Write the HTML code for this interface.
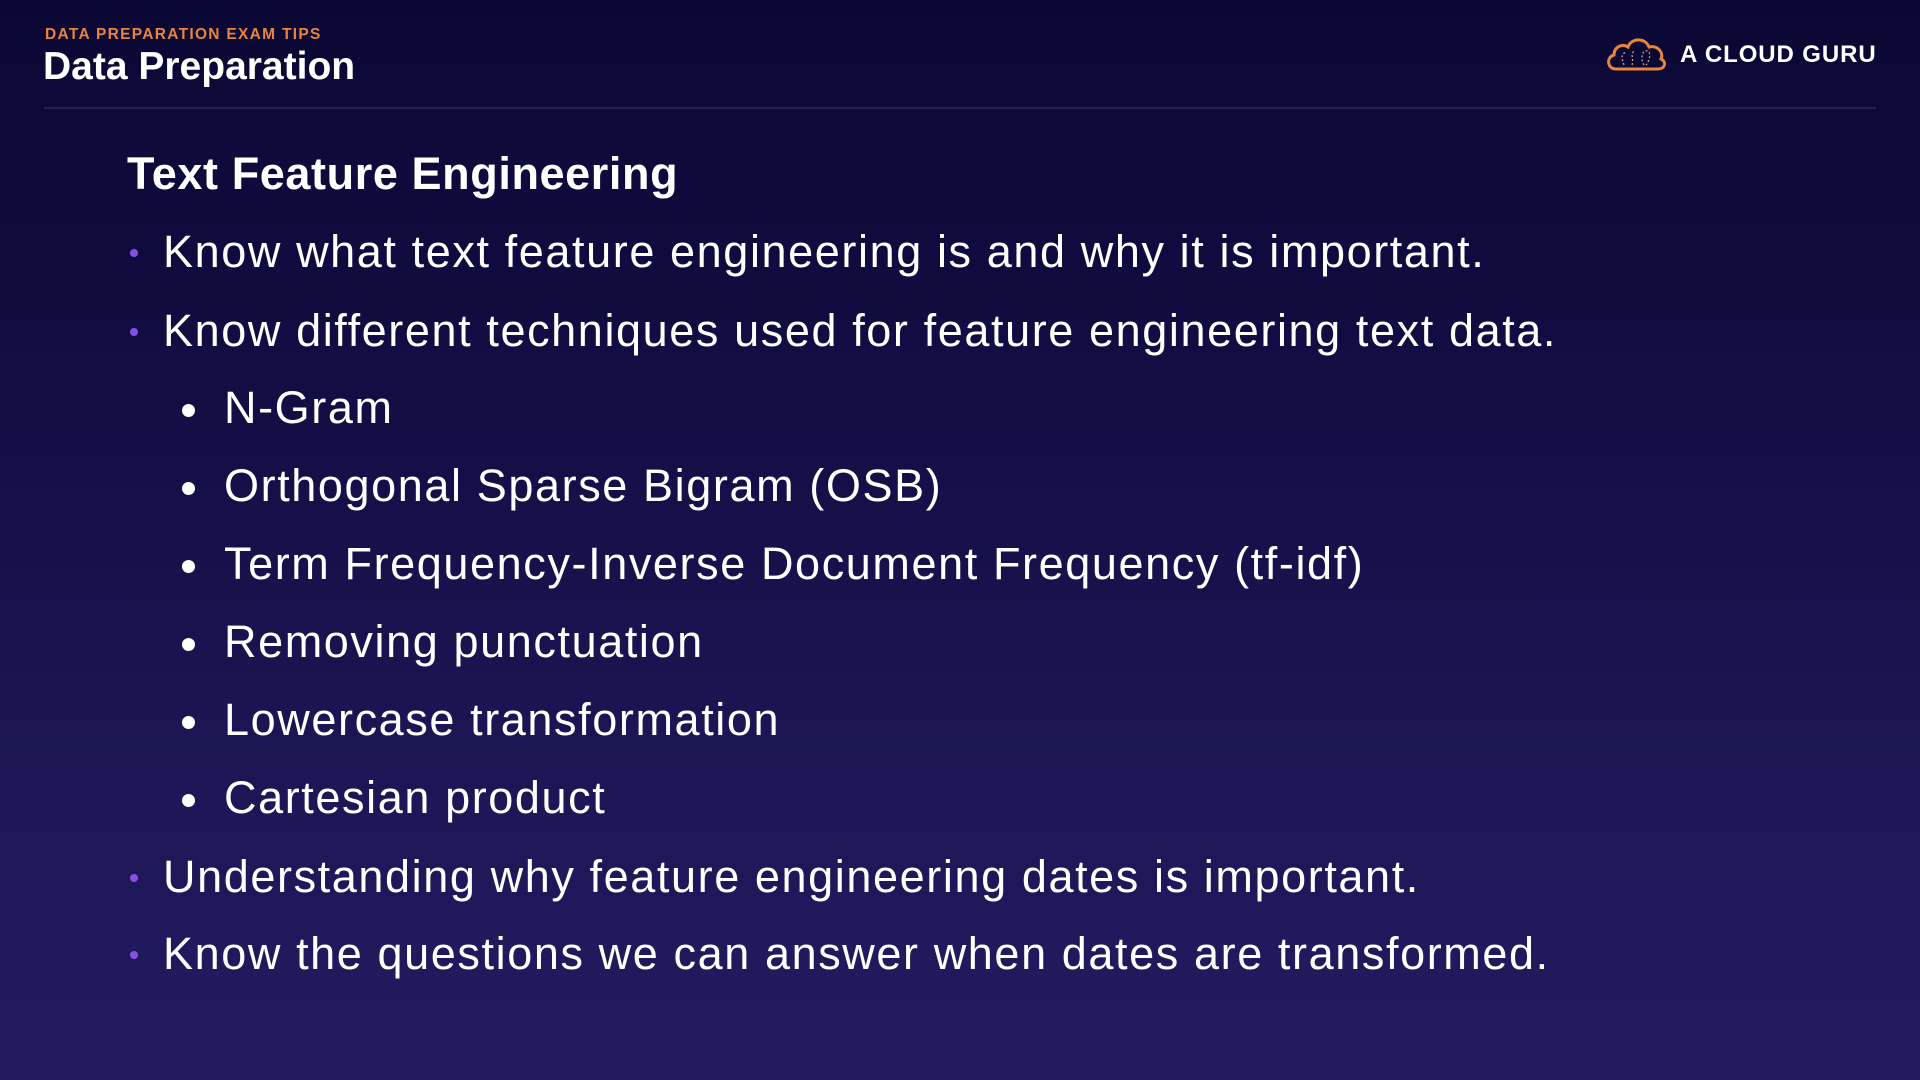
<!DOCTYPE html>
<html><head><meta charset="utf-8"><style>
html,body{margin:0;padding:0}
body{width:1920px;height:1080px;overflow:hidden;position:relative;
background:linear-gradient(180deg,#0b0734 0%,#130e45 40%,#1d1757 75%,#221b60 100%);
font-family:"Liberation Sans",sans-serif;color:#fff}
.eb{position:absolute;left:45px;top:26px;font-size:15.5px;font-weight:bold;color:#e8843c;letter-spacing:1.3px}
.tt{position:absolute;left:43px;top:45px;font-size:39px;font-weight:bold;letter-spacing:0px}
.hr{position:absolute;left:44px;top:107px;width:1832px;height:2px;background:#231e58}
.logo{position:absolute;left:1680px;top:41px;font-size:24px;font-weight:bold;letter-spacing:0.9px}
.h{position:absolute;left:127px;top:148px;font-size:45px;font-weight:bold;letter-spacing:0.6px}
.l{position:absolute;left:163px;font-size:45px;line-height:50px;letter-spacing:1.6px;white-space:nowrap}
.l:before{content:"";position:absolute;left:-33px;top:22px;width:8px;height:8px;border-radius:50%;background:#8a4fe2}
.s{left:224px}
.s:before{left:-42px;top:21px;width:13px;height:13px;background:#fff}
</style></head><body>
<div class="eb">DATA PREPARATION EXAM TIPS</div>
<div class="tt">Data Preparation</div>
<div class="hr"></div>
<svg style="position:absolute;left:1604px;top:35px" width="64" height="38" viewBox="0 0 64 38">
<path d="M12 34 C3 34 2 22 10 20 C10 12 18 8 24 12 C27 3 41 2 45 12 C53 10 60 17 57 24 C63 27 61 34 54 34 Z" fill="none" stroke="#e8843c" stroke-width="3"/>
<path d="M20 30 C18 24 16 20 22 17 M28 30 C30 24 26 20 30 16 M40 30 C36 24 38 14 44 16 C48 20 44 28 42 30" fill="none" stroke="#c9a27d" stroke-width="1.3" stroke-dasharray="2 2"/>
</svg>
<div class="logo">A CLOUD GURU</div>
<div class="h">Text Feature Engineering</div>
<div class="l" style="top:227px">Know what text feature engineering is and why it is important.</div>
<div class="l" style="top:306px">Know different techniques used for feature engineering text data.</div>
<div class="l s" style="top:383px">N-Gram</div>
<div class="l s" style="top:461px">Orthogonal Sparse Bigram (OSB)</div>
<div class="l s" style="top:539px">Term Frequency-Inverse Document Frequency (tf-idf)</div>
<div class="l s" style="top:617px">Removing punctuation</div>
<div class="l s" style="top:695px">Lowercase transformation</div>
<div class="l s" style="top:773px">Cartesian product</div>
<div class="l" style="top:852px">Understanding why feature engineering dates is important.</div>
<div class="l" style="top:929px">Know the questions we can answer when dates are transformed.</div>
</body></html>
